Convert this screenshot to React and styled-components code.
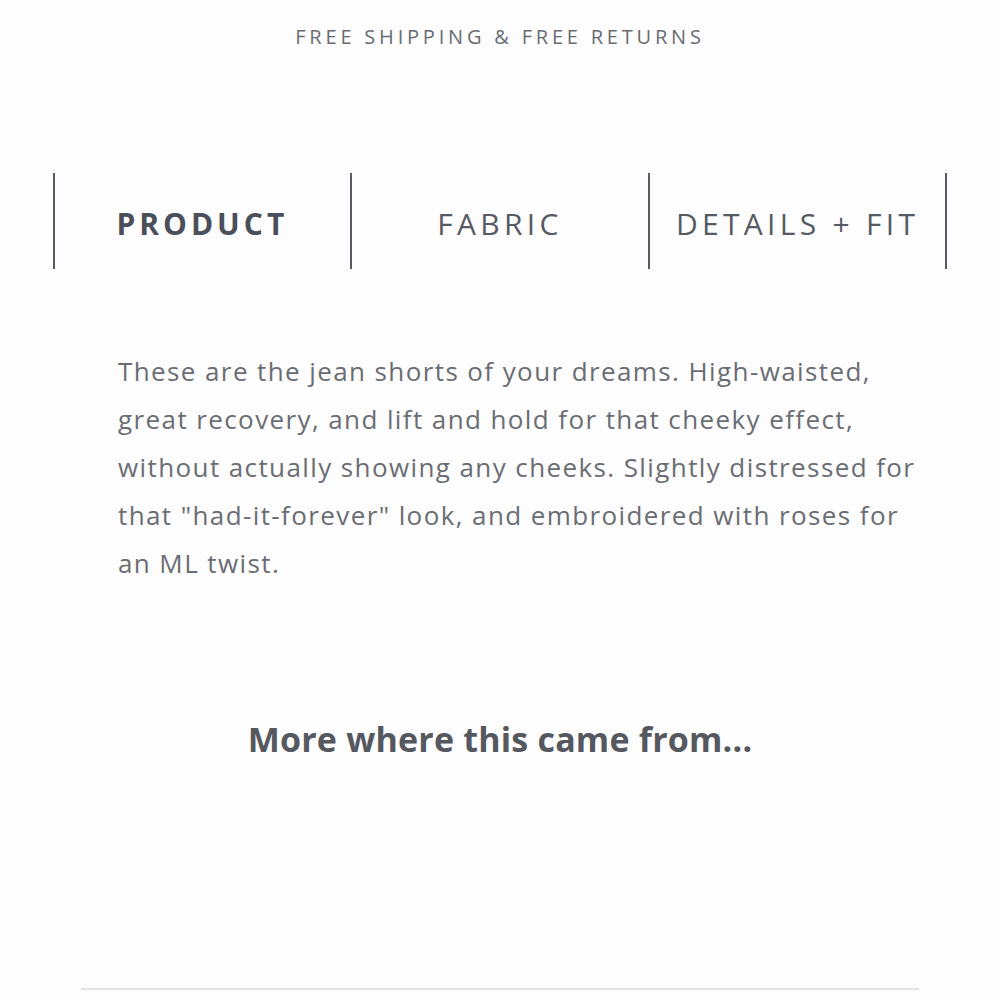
import React from 'react'
import styled, { createGlobalStyle } from 'styled-components'

const GlobalStyle = createGlobalStyle`
  html, body {
    margin: 0;
    padding: 0;
    background: #fdfdfd;
    font-family: "Open Sans", Lato, sans-serif;
  }
`

const Page = styled.div`
  width: 1000px;
  height: 1000px;
  display: flex;
  flex-direction: column;
  align-items: center;
  overflow: hidden;
`

const Banner = styled.div`
  margin-top: 25px;
  font-size: 20px;
  letter-spacing: 3.8px;
  color: #686c72;
  line-height: 24px;
`

const Tabs = styled.div`
  margin-top: 124px;
  width: 893px;
  display: grid;
  grid-template-columns: repeat(3, 1fr);
  border-left: 2px solid #575b62;
`

const Tab = styled.div`
  height: 96px;
  display: flex;
  align-items: center;
  justify-content: center;
  border-right: 2px solid #575b62;
  font-size: 30px;
  letter-spacing: ${p => (p.active ? '4px' : '4.3px')};
  font-weight: ${p => (p.active ? 700 : 400)};
  color: ${p => (p.active ? '#4b4f59' : '#565a62')};
  padding-top: 4px;
  box-sizing: border-box;
`

const Copy = styled.p`
  margin: 78px 0 0;
  align-self: flex-start;
  padding-left: 118px;
  font-size: 26px;
  letter-spacing: 1.4px;
  line-height: 48px;
  color: #6a6d73;
`

const Heading = styled.h2`
  margin: 129px 0 0;
  font-size: 34px;
  letter-spacing: 0.2px;
  font-weight: 700;
  color: #55585f;
`

const Rule = styled.div`
  margin-top: 226px;
  width: 838px;
  height: 2px;
  background: #e2e2e2;
`

const tabs = ['PRODUCT', 'FABRIC', 'DETAILS + FIT']

const lines = [
  'These are the jean shorts of your dreams. High-waisted,',
  'great recovery, and lift and hold for that cheeky effect,',
  'without actually showing any cheeks. Slightly distressed for',
  'that "had-it-forever" look, and embroidered with roses for',
  'an ML twist.',
]

const App = () => {
  return (
    <Page>
      <GlobalStyle />
      <Banner>FREE SHIPPING &amp; FREE RETURNS</Banner>
      <Tabs>
        {tabs.map((t, i) => (
          <Tab key={t} active={i === 0}>{t}</Tab>
        ))}
      </Tabs>
      <Copy>
        {lines.map((l, i) => (
          <React.Fragment key={i}>
            {l}
            {i < lines.length - 1 && <br />}
          </React.Fragment>
        ))}
      </Copy>
      <Heading>More where this came from...</Heading>
      <Rule />
    </Page>
  )
}

export default App
